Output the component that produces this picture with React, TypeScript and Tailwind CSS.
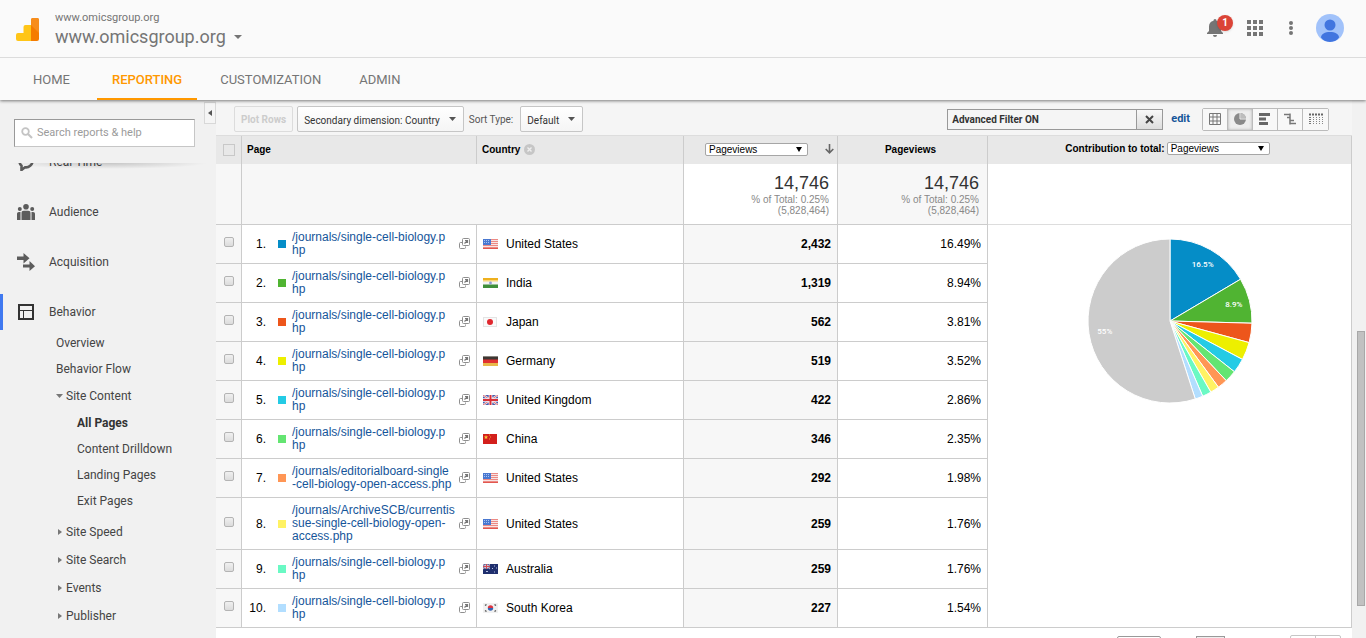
import { useState } from "react";
import type { ReactNode } from "react";

type Country = "us" | "in" | "jp" | "de" | "gb" | "cn" | "au" | "kr";
type PageRow = {
  path: string;
  flag: Country;
  country: string;
  views: string;
  share: number;
  color: string;
};

// long paths are wrapped by hand, they hold no spaces to break on
const scbPath = "/journals/single-cell-biology.p\nhp";

const rows: PageRow[] = [
  { path: scbPath, flag: "us", country: "United States", views: "2,432", share: 16.49, color: "#058dc7" },
  { path: scbPath, flag: "in", country: "India", views: "1,319", share: 8.94, color: "#50b432" },
  { path: scbPath, flag: "jp", country: "Japan", views: "562", share: 3.81, color: "#ed561b" },
  { path: scbPath, flag: "de", country: "Germany", views: "519", share: 3.52, color: "#edef00" },
  { path: scbPath, flag: "gb", country: "United Kingdom", views: "422", share: 2.86, color: "#24cbe5" },
  { path: scbPath, flag: "cn", country: "China", views: "346", share: 2.35, color: "#64e572" },
  { path: "/journals/editorialboard-single\n-cell-biology-open-access.php", flag: "us", country: "United States", views: "292", share: 1.98, color: "#ff9655" },
  { path: "/journals/ArchiveSCB/currentis\nsue-single-cell-biology-open-\naccess.php", flag: "us", country: "United States", views: "259", share: 1.76, color: "#fff263" },
  { path: scbPath, flag: "au", country: "Australia", views: "259", share: 1.76, color: "#6af9c4" },
  { path: scbPath, flag: "kr", country: "South Korea", views: "227", share: 1.54, color: "#b2deff" },
];

const tabs = ["HOME", "REPORTING", "CUSTOMIZATION", "ADMIN"];
const contentPages = ["All Pages", "Content Drilldown", "Landing Pages", "Exit Pages"];
const collapsedSections = ["Site Speed", "Site Search", "Events", "Publisher"];

const flagArt: Record<Country, ReactNode> = {
  us: (
    <>
      <rect width="15" height="10" fill="#f8e4e4" />
      <path d="M0 .5h15M0 2.500h15M0 4.500h15M0 6.500h15M0 8.500h15" stroke="#ec8a84" />
      <path d="M0 9.500h15" stroke="#e2574f" />
      <rect width="8" height="6" fill="#4a78d0" />
      <path d="M1 1.500h6M1 3.500h6" stroke="#a9c3f2" strokeDasharray="1 1" />
    </>
  ),
  in: (
    <>
      <rect width="15" height="10" fill="#f4f4f4" />
      <rect width="15" height="2" fill="#eeb01e" />
      <rect y="2" width="15" height="1.500" fill="#f8d877" />
      <rect y="6.500" width="15" height="3.500" fill="#3f8f3a" />
      <circle cx="7.500" cy="5" r="1.400" fill="#8c9bd0" />
    </>
  ),
  jp: (
    <>
      <rect x=".5" y=".5" width="13" height="9" fill="#fafafa" stroke="#e4e4e4" />
      <circle cx="7" cy="5" r="3" fill="#e0282e" />
    </>
  ),
  de: (
    <>
      <rect width="15" height="1" fill="#8a8580" />
      <rect y="1" width="15" height="3" fill="#3d3733" />
      <rect y="3.500" width="15" height="3.500" fill="#e03030" />
      <rect y="7" width="15" height="3" fill="#e8b84a" />
    </>
  ),
  gb: (
    <>
      <rect width="15" height="10" fill="#4a5cac" />
      <path d="M0 0l15 10M15 0L0 10" stroke="#f3f3f8" strokeWidth="2.2" />
      <path d="M0 0l15 10M15 0L0 10" stroke="#d9484e" strokeWidth=".8" />
      <path d="M7.5 0v10M0 5h15" stroke="#f3f3f8" strokeWidth="3.6" />
      <path d="M7.5 0v10M0 5h15" stroke="#d92f38" strokeWidth="2" />
    </>
  ),
  cn: (
    <>
      <rect width="14" height="10" fill="#d3201c" />
      <path d="M3 1l.6 1.4 1.5.1-1.1 1 .3 1.5L3 4.200l-1.300.8.3-1.500-1.100-1 1.500-.1z" fill="#f8c83a" />
      <path d="M6 1h1M7 3h1M6 5h1" stroke="#f0a030" />
    </>
  ),
  au: (
    <>
      <rect width="15" height="10" fill="#1f2f6e" />
      <path d="M0 0l7 5M7 0L0 5" stroke="#c9b9d2" strokeWidth="1" />
      <path d="M3.500 0v5M0 2.500h7" stroke="#e9d9e2" strokeWidth="2" />
      <path d="M3.500 0v5M0 2.500h7" stroke="#d04b55" strokeWidth="1" />
      <path d="M3 7.500h2M11 2h1M11 8h1M9 4.500h1M13 4h1" stroke="#b6c0e4" strokeWidth="1.200" />
    </>
  ),
  kr: (
    <>
      <rect width="15" height="10" fill="#f1f1f1" />
      <path d="M4.800 5a2.700 2.700 0 0 1 5.400 0z" fill="#dc3340" />
      <path d="M4.800 5a2.700 2.700 0 0 0 5.400 0z" fill="#3465b4" />
      <path d="M2 2.500l1.500-1M2 7.500l1.500 1M13 2.500l-1.500-1M13 7.500l-1.500 1" stroke="#555" strokeWidth="1.400" />
    </>
  ),
};

function Flag({ code }: { code: Country }) {
  return (
    <svg width="15" height="10" viewBox="0 0 15 10" className="shrink-0" aria-hidden="true">
      {flagArt[code]}
    </svg>
  );
}

function Caret({ className = "h-1 w-2" }: { className?: string }) {
  return (
    <svg viewBox="0 0 8 4" preserveAspectRatio="none" className={`shrink-0 ${className}`} aria-hidden="true">
      <path d="M0 0h8L4 4z" fill="currentColor" />
    </svg>
  );
}

function OpenIcon() {
  return (
    <svg width="12" height="12" viewBox="0 0 12 12" fill="none" aria-hidden="true">
      <path d="M3.500 4.500h-2a1 1 0 0 0-1 1v4a1 1 0 0 0 1 1h4a1 1 0 0 0 1-1v-1" stroke="#8f8f8f" />
      <rect x="3.500" y=".5" width="7" height="7" rx="1" stroke="#8f8f8f" />
      <path d="M5.500 5.500L8 3M6 2.500h2.500V5" stroke="#777" strokeWidth="1.200" />
    </svg>
  );
}

function MetricSelect({ label, id }: { label: string; id: string }) {
  return (
    <span className="relative flex">
      <select
        id={id}
        aria-label={label}
        className="h-[13px] w-[103px] appearance-none rounded-xs border border-[#a6a6a6] bg-white pl-[3px] font-['Liberation_Sans',sans-serif] text-[10px] leading-[11px] font-normal text-black"
      >
        <option>Pageviews</option>
      </select>
      <svg width="6" height="5" viewBox="0 0 6 5" className="pointer-events-none absolute top-1 right-1.5" aria-hidden="true">
        <path d="M0 0h6L3 5z" fill="#000" />
      </svg>
    </span>
  );
}

function PieChart() {
  const r = 82;
  const point = (pct: number, radius: number) => {
    const a = (pct / 100) * Math.PI * 2;
    return [83 + Math.sin(a) * radius, 83 - Math.cos(a) * radius];
  };
  const total = rows.reduce((sum, row) => sum + row.share, 0);
  const slices = [...rows.map((row) => ({ share: row.share, color: row.color })), { share: 100 - total, color: "#cccccc" }];
  const labels: Record<number, string> = { 0: "16.5%", 1: "8.9%", 10: "55%" };
  let start = 0;

  return (
    <svg width="166" height="166" viewBox="0 0 166 166" className="mx-auto block" role="img" aria-label="Contribution to total">
      {slices.map((slice, i) => {
        const [x1, y1] = point(start, r);
        const [x2, y2] = point(start + slice.share, r);
        const [tx, ty] = point(start + slice.share / 2, 66);
        start += slice.share;
        return (
          <g key={slice.color}>
            <path
              d={`M83 83L${x1} ${y1}A${r} ${r} 0 ${slice.share > 50 ? 1 : 0} 1 ${x2} ${y2}Z`}
              fill={slice.color}
              stroke="#fff"
              strokeWidth="1"
            />
            {labels[i] && (
              <text x={tx} y={ty + 3} textAnchor="middle" fill="#fff" className="text-[8px] font-medium">
                {labels[i]}
              </text>
            )}
          </g>
        );
      })}
    </svg>
  );
}

function Header() {
  return (
    <header className="relative z-10 bg-[#fafafa] shadow-[0_1px_3px_rgba(0,0,0,0.5)]">
      <div className="flex h-[58px] items-center border-b border-[#dcdcdc] pr-[22px] pl-4">
        <svg width="23" height="23" viewBox="0 0 23 23" className="mt-0.5 shrink-0" aria-hidden="true">
          <path d="M2 15h5.500V9a2 2 0 0 1 2-2H15v16H2a2 2 0 0 1-2-2v-4a2 2 0 0 1 2-2z" fill="#ffc517" />
          <path d="M17 0h4a2 2 0 0 1 2 2v19a2 2 0 0 1-2 2h-6V2a2 2 0 0 1 2-2z" fill="#f57c00" />
          <path d="M15 7V2a2 2 0 0 1 2-2h4a2 2 0 0 1 2 2v13z" fill="#f78d1c" />
        </svg>
        <div className="ml-4 pt-0.5 text-[#757575]">
          <p className="text-[11px] leading-[14px]">www.omicsgroup.org</p>
          <button type="button" className="flex items-center gap-2 text-lg leading-6">
            www.omicsgroup.org
            <Caret />
          </button>
        </div>
        <div className="ml-auto flex items-center pb-0.5 text-[#757575]">
          <button type="button" aria-label="Notifications" className="relative mr-6 block">
            <svg width="16" height="18" viewBox="0 0 16 18" aria-hidden="true">
              <path d="M8 18a2 2 0 0 0 2-2H6a2 2 0 0 0 2 2zM14 12V7.500c0-3-1.600-5-4.500-5.700V1.500a1.500 1.500 0 0 0-3 0v.3C3.600 2.500 2 4.500 2 7.500V12L0 14v1h16v-1z" fill="currentColor" />
            </svg>
            <span className="absolute -top-1 left-2.5 flex size-4 items-center justify-center rounded-full bg-[#db4437] text-[10px] font-bold text-white shadow">1</span>
          </button>
          <button type="button" aria-label="Apps" className="mr-[26px]">
            <svg width="16" height="16" viewBox="0 0 16 16" fill="currentColor" aria-hidden="true">
              <path d="M0 0h4v4H0zM6 0h4v4H6zM12 0h4v4h-4zM0 6h4v4H0zM6 6h4v4H6zM12 6h4v4h-4zM0 12h4v4H0zM6 12h4v4H6zM12 12h4v4h-4z" />
            </svg>
          </button>
          <button type="button" aria-label="More options" className="mr-[23px]">
            <svg width="4" height="16" viewBox="0 0 4 16" fill="currentColor" aria-hidden="true">
              <circle cx="2" cy="3" r="2" />
              <circle cx="2" cy="8" r="2" />
              <circle cx="2" cy="13" r="2" />
            </svg>
          </button>
          <button type="button" aria-label="Account" className="overflow-hidden rounded-full">
            <svg width="28" height="28" viewBox="0 0 28 28" aria-hidden="true">
              <rect width="28" height="28" fill="#a1c2fa" />
              <circle cx="14" cy="11" r="5.500" fill="#4175df" />
              <path d="M5 23.500C5 20 9 18 14 18s9 2 9 5.500C21 26.500 17.500 28 14 28s-7-1.500-9-4.500z" fill="#4175df" />
            </svg>
          </button>
        </div>
      </div>
      <nav className="flex h-[42px] gap-2 pl-[18px]">
        {tabs.map((tab) => (
          <a
            key={tab}
            href="#"
            className={`flex items-center border-b-2 px-[15px] pt-1 text-[13px] first:mr-1 ${
              tab === "REPORTING" ? "border-[#ff9800] font-medium text-[#ff9800]" : "border-transparent text-[#757575]"
            }`}
          >
            {tab}
          </a>
        ))}
      </nav>
    </header>
  );
}

function SideItem({ icon, label, active }: { icon: ReactNode; label: string; active?: boolean }) {
  return (
    <a href="#" className="flex h-[50px] items-center">
      <span className={`h-9 w-[3px] ${active ? "bg-[#4079f0]" : ""}`} />
      <span className="mx-[13px] flex w-5 justify-center">{icon}</span>
      {label}
    </a>
  );
}

function Sidebar() {
  return (
    <aside className="flex w-[216px] shrink-0 flex-col bg-[#f1f1f1] text-xs text-[#444]">
      <div className="relative z-[1] flex h-[63px] shrink-0 items-start justify-between bg-[#f1f1f1] pl-3.5">
        <label className="mt-[19px] flex h-7 w-[181px] items-center gap-1 border border-[#c6c6c6] border-t-[#999] border-l-[#999] bg-white pl-1.5">
          <svg width="12" height="12" viewBox="0 0 12 12" fill="none" className="shrink-0" aria-hidden="true">
            <circle cx="4.500" cy="4.500" r="3.300" stroke="#c4c4c4" strokeWidth="1.800" />
            <path d="M7 7l4 4" stroke="#c4c4c4" strokeWidth="2.200" />
          </svg>
          <input
            type="search"
            aria-label="Search reports & help"
            placeholder="Search reports & help"
            className="min-w-0 flex-1 text-[11px] outline-none placeholder:text-[#9b9b9b]"
          />
        </label>
        <button type="button" aria-label="Collapse menu" className="mt-0.5 flex h-[22px] w-3 items-center justify-center border border-[#d8d8d8] bg-[#f5f5f5]">
          <svg width="4" height="6" viewBox="0 0 4 6" aria-hidden="true">
            <path d="M4 0v6L0 3z" fill="#555" />
          </svg>
        </button>
        <div className="absolute inset-x-2 top-full h-1.5 bg-[radial-gradient(ellipse_at_top,rgba(0,0,0,0.18),transparent_70%)]" />
      </div>
      <nav className="min-h-0 flex-1 overflow-hidden">
        <div className="-mt-[26px]">
          <SideItem
            label="Real-Time"
            icon={
              <svg width="18" height="18" viewBox="0 0 18 18" fill="none" aria-hidden="true">
                <path d="M15.500 8a6.500 6.500 0 1 0-11 4.700V17l3.500-2.700A6.500 6.500 0 0 0 15.500 8z" stroke="#5c5c5c" strokeWidth="2.600" />
              </svg>
            }
          />
          <SideItem
            label="Audience"
            icon={
              <svg width="18" height="16" viewBox="0 0 18 16" fill="#5c5c5c" aria-hidden="true">
                <circle cx="9" cy="2.800" r="2.800" />
                <circle cx="2.800" cy="5" r="2" />
                <circle cx="15.200" cy="5" r="2" />
                <path d="M4.500 16v-7c0-1.500.8-2.300 2.300-2.300h4.400c1.500 0 2.300.8 2.300 2.300v7zM0 16v-6c0-1.300.7-2 2-2h1.500v8zM18 16v-6c0-1.300-.7-2-2-2h-1.500v8z" />
              </svg>
            }
          />
          <SideItem
            label="Acquisition"
            icon={
              <svg width="18" height="18" viewBox="0 0 18 18" fill="#5c5c5c" aria-hidden="true">
                <path d="M0 3.500h6.500V0l6 5.200-6 5.200V7H0zM6 11.500h6.500V8l5.500 5.200L12.500 18v-3.500H6z" />
              </svg>
            }
          />
          <SideItem
            label="Behavior"
            active
            icon={
              <svg width="16" height="16" viewBox="0 0 16 16" fill="none" aria-hidden="true">
                <rect x="1" y="1" width="14" height="14" stroke="#333" strokeWidth="2" />
                <path d="M1 6.500h14M5.500 6.500V15" stroke="#333" strokeWidth="1" />
              </svg>
            }
          />
          <ul className="-mt-[7px] pl-14">
            <li><a href="#" className="block leading-[26px]">Overview</a></li>
            <li><a href="#" className="block leading-[26px]">Behavior Flow</a></li>
            <li className="pb-1">
              <a href="#" className="flex items-center gap-[3px] leading-7">
                <svg width="7" height="4" viewBox="0 0 7 4" aria-hidden="true"><path d="M0 0h7L3.500 4z" fill="#777" /></svg>
                Site Content
              </a>
              <ul className="pl-[21px]">
                {contentPages.map((page) => (
                  <li key={page}>
                    <a href="#" className={`block leading-[26px] ${page === "All Pages" ? "font-bold text-[#333]" : ""}`}>{page}</a>
                  </li>
                ))}
              </ul>
            </li>
            {collapsedSections.map((section) => (
              <li key={section}>
                <a href="#" className="flex items-center gap-[3px] leading-7">
                  <svg width="7" height="6" viewBox="0 0 7 6" aria-hidden="true"><path d="M2 0l4 3-4 3z" fill="#777" /></svg>
                  {section}
                </a>
              </li>
            ))}
          </ul>
        </div>
      </nav>
    </aside>
  );
}

const viewModes = [
  {
    name: "Data",
    art: <path d="M1.500 1.500h11v11h-11zM5 1.500v11M9 1.500v11M1.500 5h11M1.500 9h11" stroke="#777" fill="none" />,
  },
  {
    name: "Percentage",
    art: (
      <>
        <circle cx="7" cy="7" r="6" fill="#8a8a8a" />
        <path d="M7.500 6.500V1a5.500 5.500 0 0 1 5.500 5.500z" fill="#bdbdbd" />
        <path d="M7 1v6h6" stroke="#f0f0f0" fill="none" />
      </>
    ),
  },
  { name: "Performance", art: <path d="M1 2.500h11M1 7h7M1 11.500h9" stroke="#666" strokeWidth="3" fill="none" /> },
  {
    name: "Comparison",
    art: <path d="M1 2.500h6M4 5.500h3M7 1.500v11M7 8.500h4M7 11.500h6" stroke="#777" strokeWidth="1.500" fill="none" />,
  },
  {
    name: "Pivot",
    art: (
      <>
        <path d="M0 2.500h14" stroke="#666" strokeWidth="2" strokeDasharray="2 1" />
        <path d="M1 5v8" stroke="#777" strokeWidth="2" strokeDasharray="1 1" />
        <path d="M4.500 5v8M7.500 5v8M10.500 5v8M13.500 5v8" stroke="#888" strokeDasharray="1 1" />
      </>
    ),
  },
];

const toolButton = "flex h-[26px] items-center gap-[9px] rounded-xs border border-[#c6c6c6] bg-linear-to-b from-white to-[#f5f5f5] pt-0.5 pr-[7px] pl-1.5 text-[10px] text-[#333]";

function Toolbar() {
  const [mode, setMode] = useState("Percentage");

  return (
    <div className="flex h-[35px] items-center bg-[#f5f5f5] pt-[3px] pr-[23px] pl-[18px] text-[10px] text-[#555]">
      <button type="button" disabled className="mr-1 h-[26px] rounded-xs border border-[#dcdcdc] px-1.5 font-bold text-[#ccc]">
        Plot Rows
      </button>
      <button type="button" className={`${toolButton} mr-[5px]`}>
        Secondary dimension: Country
        <Caret className="mb-0.5 h-1 w-[7px] text-[#555]" />
      </button>
      <span className="mr-[7px]">Sort Type:</span>
      <button type="button" className={toolButton}>
        Default
        <Caret className="mb-0.5 h-1 w-[7px] text-[#555]" />
      </button>
      <div className="ml-auto flex items-center">
        <div className="flex h-[21px] w-[216px] items-stretch border border-[#999] font-bold text-[#333]">
          <span className="flex flex-1 items-center pl-1">Advanced Filter ON</span>
          <button type="button" aria-label="Clear filter" className="flex w-[26px] items-center justify-center border-l border-[#999] bg-linear-to-b from-[#f8f8f8] to-[#ddd]">
            <svg width="9" height="9" viewBox="0 0 9 9" aria-hidden="true">
              <path d="M1 1l7 7M8 1L1 8" stroke="#444" strokeWidth="2" />
            </svg>
          </button>
        </div>
        <a href="#" className="mr-3 ml-2 text-[11px] font-bold text-[#15559a]">edit</a>
        <div className="flex rounded-xs border border-[#bbb]">
          {viewModes.map((view) => (
            <button
              key={view.name}
              type="button"
              aria-label={view.name}
              aria-pressed={mode === view.name}
              onClick={() => setMode(view.name)}
              className={`flex h-[21px] w-[25px] items-center justify-center border-[#bbb] not-last:border-r ${
                mode === view.name ? "bg-[#eee] shadow-[inset_0_0_3px_rgba(0,0,0,0.3)]" : "bg-[#f8f8f8]"
              }`}
            >
              <svg width="14" height="14" viewBox="0 0 14 14" aria-hidden="true">{view.art}</svg>
            </button>
          ))}
        </div>
      </div>
    </div>
  );
}

function TotalCell({ className }: { className: string }) {
  return (
    <td className={`border-r border-b border-[#ccc] pr-2 text-right align-top ${className}`}>
      <p className="mt-2 text-lg leading-[22px] text-[#333]">14,746</p>
      <p className="text-[10px] leading-[11px] text-[#888]">% of Total: 0.25%<br />(5,828,464)</p>
    </td>
  );
}

function ReportTable() {
  return (
    <table className="w-full table-fixed border-separate border-spacing-0 border-t border-[#ddd] bg-white font-['Liberation_Sans',sans-serif] text-xs text-black">
      <colgroup>
        <col className="w-[26px]" />
        <col className="w-[235px]" />
        <col className="w-[207px]" />
        <col className="w-[154px]" />
        <col className="w-[150px]" />
        <col />
      </colgroup>
      <thead className="bg-[#e8e8e8] text-[10px] font-bold">
        <tr className="h-7">
          <th className="border-r border-[#ccc]">
            <input type="checkbox" aria-label="Select all rows" className="mx-auto block size-3 appearance-none border border-[#c8c8c8]" />
          </th>
          <th className="border-r border-[#ccc] pl-[5px] text-left">Page</th>
          <th className="border-r border-[#ccc] pl-[5px] text-left">
            <span className="flex items-center gap-1">
              Country
              <button type="button" aria-label="Remove dimension">
                <svg width="11" height="11" viewBox="0 0 11 11" className="block" aria-hidden="true">
                  <circle cx="5.500" cy="5.500" r="5.500" fill="#c6c6c6" />
                  <path d="M3.500 3.500l4 4M7.500 3.500l-4 4" stroke="#eee" strokeWidth="1.400" />
                </svg>
              </button>
            </span>
          </th>
          <th className="border-r border-[#ccc] pb-0.5">
            <span className="flex items-center justify-between pr-[3px] pl-[21px]">
              <MetricSelect id="metric" label="Metric" />
              <svg width="9" height="10" viewBox="0 0 9 10" fill="none" aria-hidden="true">
                <path d="M4.500 0v8.500M.7 5l3.800 3.800L8.300 5" stroke="#666" strokeWidth="1.600" />
              </svg>
            </span>
          </th>
          <th className="border-r border-[#ccc] pr-1 text-center">Pageviews</th>
          <th className="border-r border-[#ccc] pb-0.5">
            <span className="flex items-center justify-center gap-0.5 pr-1">
              <label htmlFor="contribution">Contribution to total:</label>
              <MetricSelect id="contribution" label="Contribution to total:" />
            </span>
          </th>
        </tr>
      </thead>
      <tbody>
        <tr className="h-[61px]">
          <td className="border-r border-b border-[#ccc] bg-[#f7f7f7]" />
          <td colSpan={2} className="border-r border-b border-[#ccc] bg-[#f7f7f7]" />
          <TotalCell className="bg-white" />
          <TotalCell className="bg-[#f7f7f7]" />
          <td className="border-r border-b border-r-[#ccc] border-b-[#ddd]" />
        </tr>
        {rows.map((row, i) => (
          <tr key={i}>
            <td className="border-r border-b border-[#ccc] bg-[#f7f7f7] pb-1">
              <input
                type="checkbox"
                aria-label={`Select row ${i + 1}`}
                className="mx-auto block size-2.5 appearance-none rounded-xs border border-[#b4b4b4] bg-linear-to-b from-[#f0f0f0] to-[#dcdcdc]"
              />
            </td>
            <td className="border-r border-b border-[#ccc] py-1.5">
              <div className="flex items-center">
                <span className="w-6 shrink-0 text-right">{i + 1}.</span>
                <span className="mr-1.5 ml-3 size-2 shrink-0" style={{ background: row.color }} />
                <a href="#" className="w-[166px] shrink-0 leading-[13px] whitespace-pre text-[#15559a]">{row.path}</a>
                <a href="#" aria-label="Open page" className="ml-px">
                  <OpenIcon />
                </a>
              </div>
            </td>
            <td className="border-r border-b border-[#ccc] pl-1.5">
              <span className="flex items-center gap-2">
                <Flag code={row.flag} />
                {row.country}
              </span>
            </td>
            <td className="border-r border-b border-[#ccc] bg-[#f7f7f7] pr-1.5 text-right font-bold">{row.views}</td>
            <td className="border-r border-b border-[#ccc] pr-1.5 text-right">{row.share.toFixed(2)}%</td>
            {i === 0 && (
              <td rowSpan={rows.length} className="border-r border-b border-[#ccc] pt-[13px] align-top font-[Roboto,sans-serif]">
                <PieChart />
              </td>
            )}
          </tr>
        ))}
      </tbody>
    </table>
  );
}

function Pager() {
  return (
    <div className="flex items-start justify-end bg-white pt-2 pr-[11px] pb-2">
      <select aria-label="Rows per page" className="mr-[35px] h-5 w-11 appearance-none rounded-xs border border-[#999] text-[10px]">
        <option>10</option>
      </select>
      <input aria-label="Go to page" defaultValue="1" className="mr-[65px] h-5 w-[29px] border border-[#999] bg-[#eee] text-[10px]" />
      <div className="-mt-px flex h-5 w-[51px] rounded-xs border border-[#c6c6c6]">
        <button type="button" aria-label="Previous page" className="flex-1 border-r border-[#c6c6c6]" />
        <button type="button" aria-label="Next page" className="flex-1" />
      </div>
    </div>
  );
}

export default function App() {
  return (
    <div className="flex h-screen flex-col overflow-hidden bg-white font-[Roboto,sans-serif]">
      <Header />
      <div className="flex min-h-0 flex-1">
        <Sidebar />
        <main className="min-w-0 flex-1 overflow-hidden">
          <Toolbar />
          <ReportTable />
          <Pager />
        </main>
        <div className="flex w-3.5 shrink-0 flex-col items-end bg-[#f1f1f1] pr-px">
          <div className="basis-[43%]" />
          <div className="w-2 basis-[51%] border border-[#a8a8a8] bg-[#c1c1c1]" />
        </div>
      </div>
    </div>
  );
}
